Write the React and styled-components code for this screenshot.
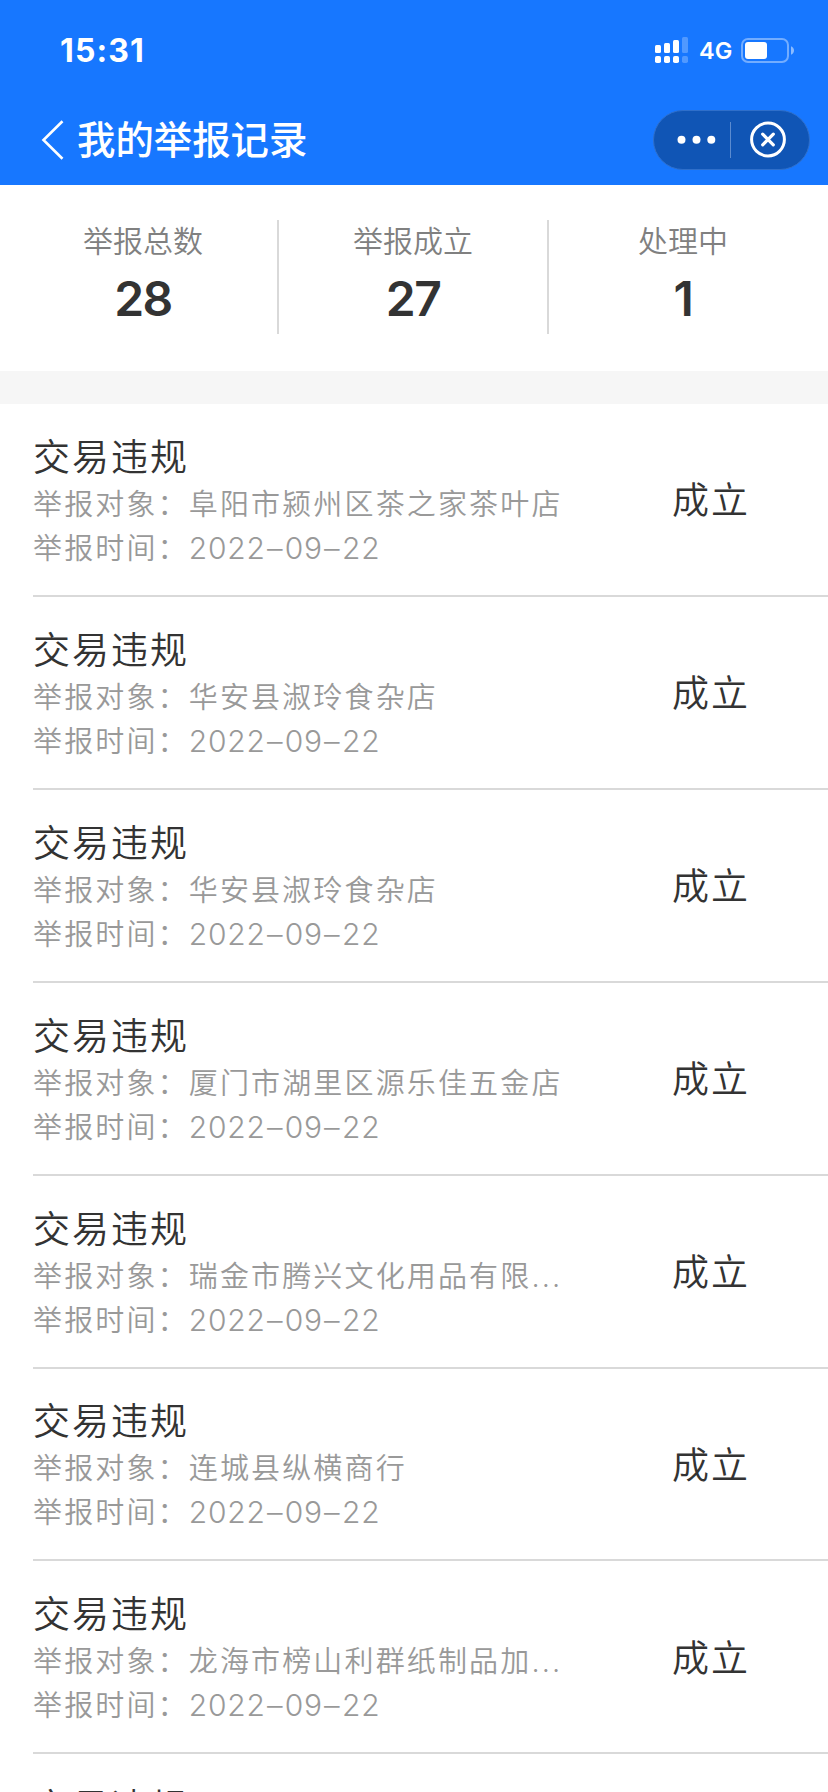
import React from 'react';
import styled, { createGlobalStyle } from 'styled-components';

const colors = {
    primary: '#1777ff',
    capsule: '#1055b5',
    text: '#333333',
    gray1: '#808080',
    gray2: '#999999',
    line: '#d9d9d9',
    band: '#f6f6f6',
};

const GlobalStyle = createGlobalStyle`
  * {
    box-sizing: border-box;
  }
  body {
    margin: 0;
    background: #ffffff;
    font-family: Inter, 'Noto Sans CJK SC', sans-serif;
    color: ${colors.text};
  }
`;

const Screen = styled.div`
  width: 828px;
  height: 1792px;
  overflow: hidden;
  background: #ffffff;
`;

const Header = styled.header`
  height: 185px;
  background: ${colors.primary};
  color: #ffffff;
`;

const StatusBar = styled.div`
  display: flex;
  align-items: center;
  justify-content: space-between;
  height: 100px;
  padding: 0 34px 0 60px;
`;

const Time = styled.span`
  margin-top: 1px;
  font-size: 32px;
  font-weight: 700;
  letter-spacing: 1.1px;
  line-height: 40px;
`;

const StatusIcons = styled.div`
  display: flex;
  align-items: center;
`;

const Network = styled.span`
  width: 33px;
  margin: 2px 9px 0 10px;
  font-size: 23.5px;
  font-weight: 600;
  line-height: 28px;
  white-space: nowrap;
`;

const NavBar = styled.div`
  display: flex;
  align-items: center;
  height: 80px;
  padding: 0 18px 0 41px;
`;

const PageTitle = styled.h1`
  flex: 1;
  margin: 0 0 0 12px;
  font-size: 38.4px;
  font-weight: 500;
  line-height: 56px;
`;

const Capsule = styled.div`
  display: flex;
  align-items: center;
  width: 157px;
  height: 60px;
  border: 1px solid #2f6fca;
  border-radius: 30px;
  background: ${colors.capsule};
`;

const Stats = styled.section`
  display: flex;
  height: 186px;
  padding: 35px 9px 0;
`;

const Stat = styled.div`
  display: flex;
  flex-direction: column;
  align-items: center;
  width: 270px;
  height: 114px;
  border-right: 2px solid ${(props) => (props.$last ? 'transparent' : colors.line)};
`;

const StatLabel = styled.span`
  color: ${colors.gray1};
  font-size: 30px;
  font-weight: 350;
  line-height: 42px;
`;

const StatValue = styled.span`
  margin-top: 8px;
  font-size: 48px;
  font-weight: 600;
  letter-spacing: -1.5px;
  line-height: 58px;
`;

const Band = styled.div`
  height: 33px;
  background: ${colors.band};
`;

const List = styled.ul`
  margin: 0;
  padding: 0 0 0 33px;
  list-style: none;
`;

const Row = styled.li`
  display: flex;
  align-items: center;
  height: 192.91px;
  border-bottom: 2px solid ${colors.line};
`;

const Info = styled.div`
  width: 533px;
  height: 133px;
`;

const RecordTitle = styled.div`
  font-size: 37px;
  font-weight: 350;
  letter-spacing: 2px;
  line-height: 50px;
`;

const Detail = styled.div`
  height: 44px;
  color: ${colors.gray2};
  font-size: 29px;
  font-weight: 350;
  letter-spacing: 2.15px;
  line-height: 44px;
  overflow: hidden;
  text-overflow: ellipsis;
  white-space: nowrap;
`;

const DateText = styled.span`
  font-size: 30px;
  letter-spacing: 0.8px;
  line-height: 1;
`;

const Dash = styled.span`
  display: inline-block;
  width: 19px;
  text-align: center;
  transform: scaleX(1.7);
`;

const State = styled.span`
  margin: 4px 0 0 106px;
  font-size: 37px;
  font-weight: 350;
  letter-spacing: 2px;
  line-height: 50px;
`;

const records = [
    { target: '阜阳市颍州区茶之家茶叶店', date: '2022-09-22' },
    { target: '华安县淑玲食杂店', date: '2022-09-22' },
    { target: '华安县淑玲食杂店', date: '2022-09-22' },
    { target: '厦门市湖里区源乐佳五金店', date: '2022-09-22' },
    { target: '瑞金市腾兴文化用品有限...', date: '2022-09-22' },
    { target: '连城县纵横商行', date: '2022-09-22' },
    { target: '龙海市榜山利群纸制品加...', date: '2022-09-22' },
    { target: '', date: '' },
];

const SignalIcon = () => (
    <svg width="34" height="27" viewBox="0 0 34 27" fill="#fff">
        <rect x="0" y="8" width="6" height="8" rx="1.5" />
        <rect x="9" y="6" width="6" height="10" rx="1.5" />
        <rect x="18" y="3" width="6" height="13" rx="1.5" />
        <rect x="27" y="0" width="6" height="16" rx="1.5" opacity="0.25" />
        <rect x="0" y="19" width="6" height="7" rx="1.8" />
        <rect x="9" y="19" width="6" height="7" rx="1.8" />
        <rect x="18" y="19" width="6" height="7" rx="1.8" />
        <rect x="27" y="19" width="6" height="7" rx="1.8" opacity="0.25" />
    </svg>
);

const BatteryIcon = () => (
    <svg width="53" height="25" viewBox="0 0 53 25">
        <rect x="1" y="1" width="46" height="23" rx="6" fill="none" stroke="#fff" strokeWidth="2" opacity="0.4" />
        <rect x="4" y="4" width="22" height="17" rx="3" fill="#fff" />
        <path d="M50 8.200c4 1.600 4 7 0 8.600z" fill="#fff" opacity="0.5" />
    </svg>
);

const BackIcon = () => (
    <svg width="24" height="40" viewBox="0 0 24 40" fill="none" stroke="#fff" strokeWidth="2.6">
        <path d="M21.500 1.300L2.500 20L21.500 38.700" />
    </svg>
);

const CapsuleIcons = () => (
    <svg width="154" height="58" viewBox="0 0 154 58">
        <g fill="#fff">
            <circle cx="27.500" cy="28.800" r="4" />
            <circle cx="42.500" cy="28.800" r="4" />
            <circle cx="57.300" cy="28.800" r="4" />
        </g>
        <path d="M76.500 11V47" stroke="#5b8bd0" strokeWidth="1" />
        <circle cx="114" cy="28.500" r="16.400" fill="none" stroke="#fff" strokeWidth="3" />
        <path d="M108.700 23.200l10.600 10.600M119.300 23.200l-10.600 10.600" stroke="#fff" strokeWidth="3.200" strokeLinecap="round" />
    </svg>
);

const RecordDate = ({ value }) => (
    <DateText>
        {value.split('-').map((part, i) => (
            <React.Fragment key={i}>
                {i > 0 && <Dash>-</Dash>}
                {part}
            </React.Fragment>
        ))}
    </DateText>
);

const Record = ({ target, date }) => (
    <Row>
        <Info>
            <RecordTitle>交易违规</RecordTitle>
            {target && <Detail>举报对象：{target}</Detail>}
            {date && (
                <Detail>
                    举报时间：
                    <RecordDate value={date} />
                </Detail>
            )}
        </Info>
        {date && <State>成立</State>}
    </Row>
);

export default function App() {
    return (
        <Screen>
            <GlobalStyle />
            <Header>
                <StatusBar>
                    <Time>15:31</Time>
                    <StatusIcons>
                        <SignalIcon />
                        <Network>4G</Network>
                        <BatteryIcon />
                    </StatusIcons>
                </StatusBar>
                <NavBar>
                    <BackIcon />
                    <PageTitle>我的举报记录</PageTitle>
                    <Capsule>
                        <CapsuleIcons />
                    </Capsule>
                </NavBar>
            </Header>
            <Stats>
                <Stat>
                    <StatLabel>举报总数</StatLabel>
                    <StatValue>28</StatValue>
                </Stat>
                <Stat>
                    <StatLabel>举报成立</StatLabel>
                    <StatValue>27</StatValue>
                </Stat>
                <Stat $last>
                    <StatLabel>处理中</StatLabel>
                    <StatValue>1</StatValue>
                </Stat>
            </Stats>
            <Band />
            <List>
                {records.map((record, i) => (
                    <Record key={i} {...record} />
                ))}
            </List>
        </Screen>
    );
}
